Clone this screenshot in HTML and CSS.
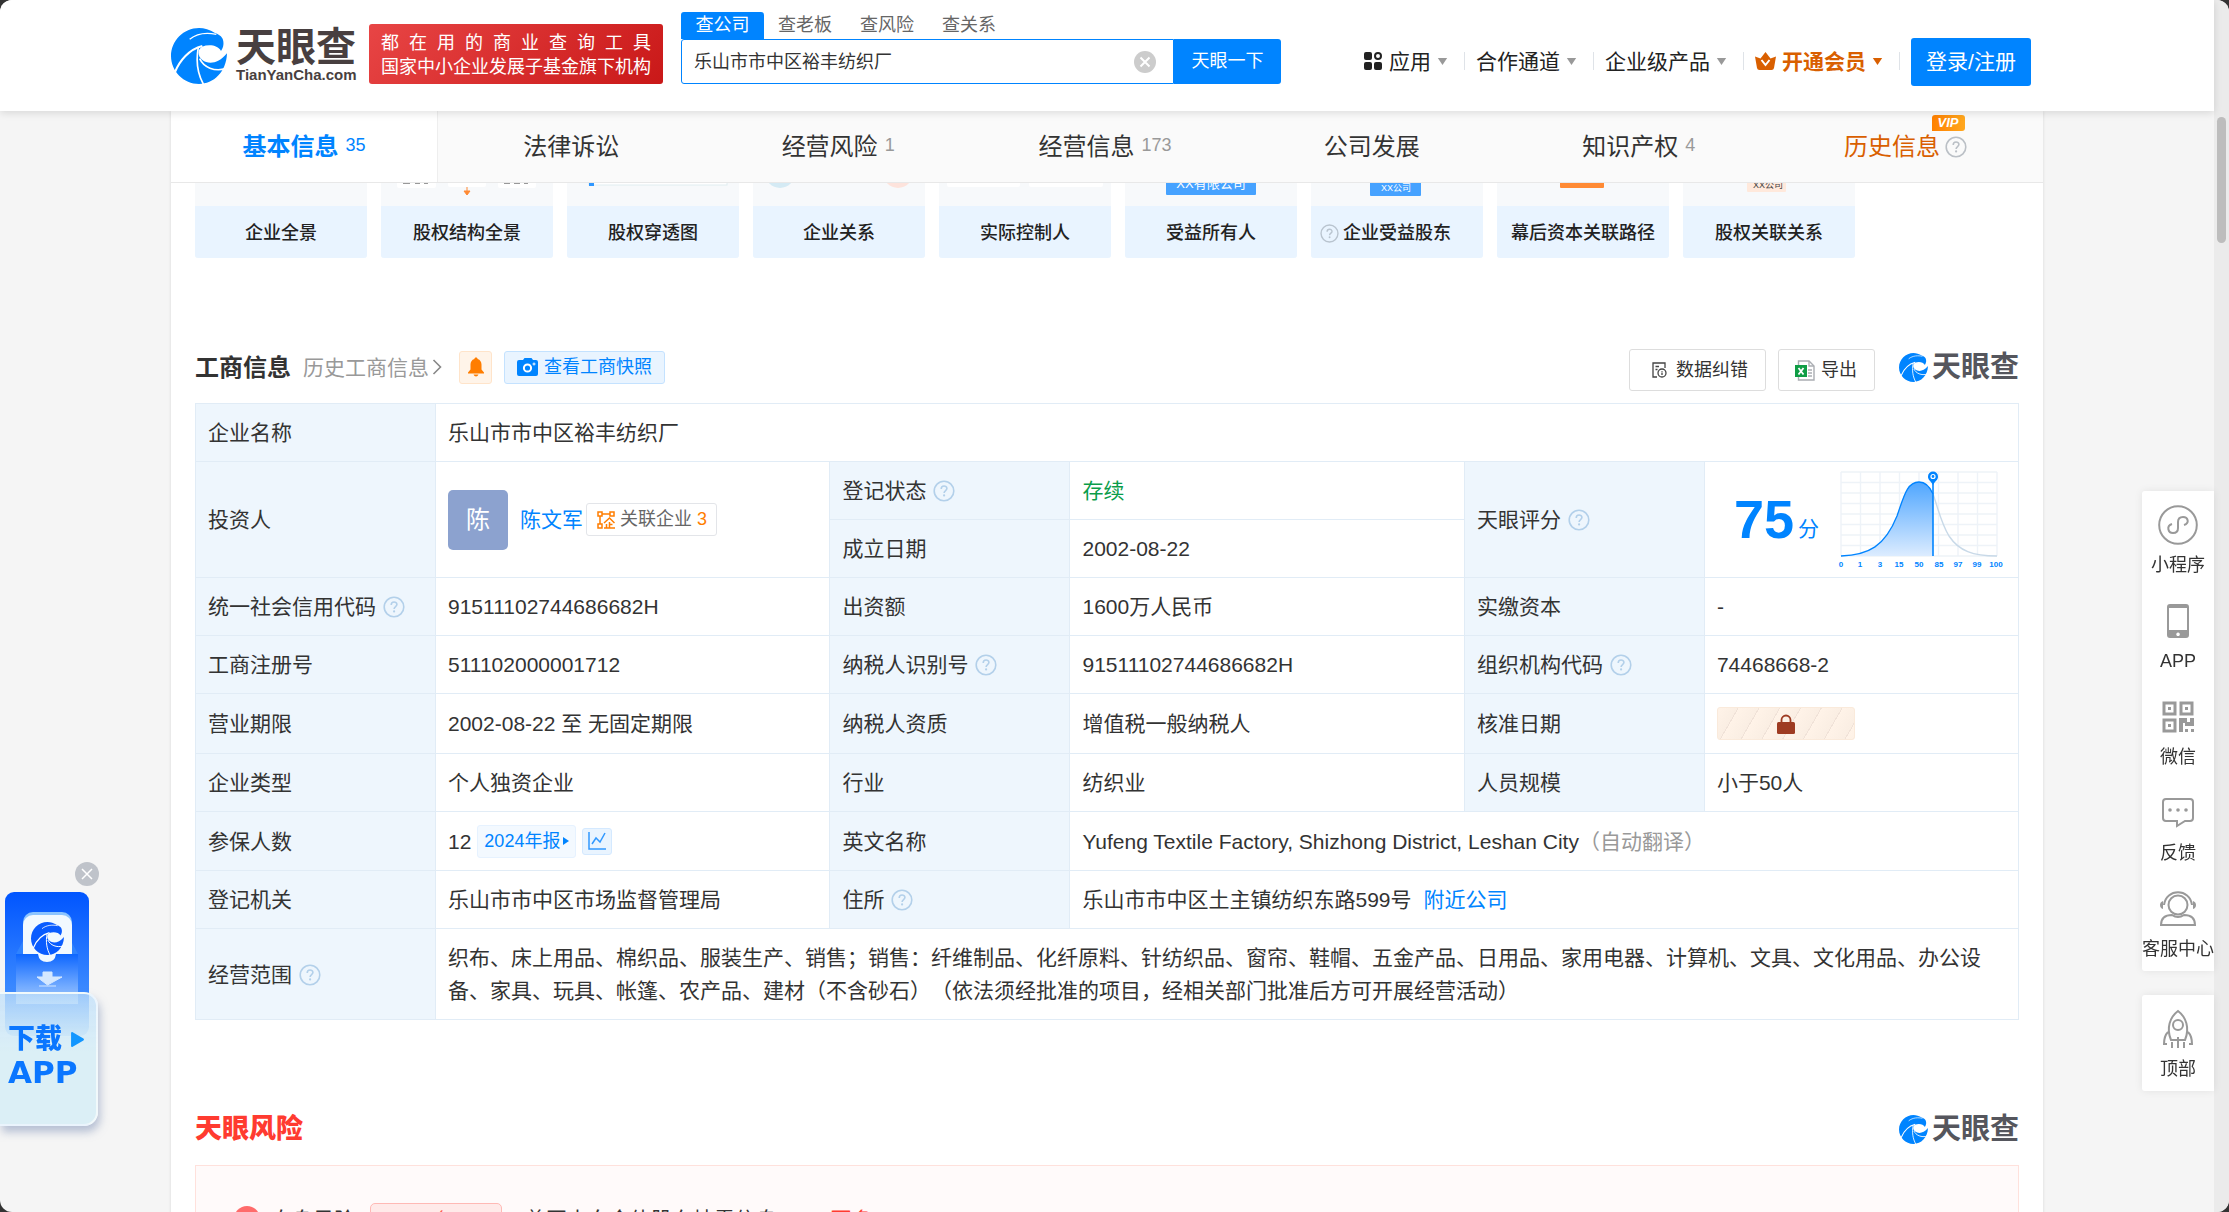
FILE: index.html
```html
<!DOCTYPE html>
<html lang="zh-CN">
<head>
<meta charset="utf-8">
<title>乐山市市中区裕丰纺织厂 - 天眼查</title>
<link rel="stylesheet" href="styles.css">
</head>
<body>
<svg class="defs" aria-hidden="true">
  <symbol id="swirl" viewBox="0 0 168 168">
    <path fill="currentColor" d="M132 15C116 5 100 0 84 0 38 0 0 38 0 84c0 46 38 84 84 84 44 0 82-36 84-92-26 32-56 34-74 20C78 82 80 64 93 56c22-8 48-4 57 13 8-10 10-26 4-38-5-9-14-13-22-16z"/>
    <g fill="none" stroke="var(--cut,#fff)" stroke-width="6">
      <path d="M56 34C80 14 112 14 136 19" stroke-width="4"/>
      <path d="M12 132C26 98 54 64 94 54"/>
      <path d="M82 58C74 100 80 138 98 170" stroke-width="5"/>
      <path d="M86 92C98 118 130 132 164 122" stroke-width="5"/>
    </g>
  </symbol>
  <symbol id="help" viewBox="0 0 22 22">
    <g fill="none" stroke="currentColor" stroke-width="1.6">
      <circle cx="11" cy="11" r="9.8"/>
      <path d="M8.2 9c0-4 5.7-3.8 5.7-.4 0 2-2.8 2-2.8 4.4"/>
    </g>
    <circle cx="11.1" cy="15.4" r="1.1" fill="currentColor"/>
  </symbol>
  <symbol id="caret" viewBox="0 0 12 9"><path d="M0 0h12L6 9z" fill="currentColor"/></symbol>
</svg>

<div class="window">
<div class="page">
  <header class="top">
    <div class="top-inner">
      <a class="logo" href="#">
        <svg class="logo-mark"><use href="#swirl"/></svg>
        <span class="logo-words"><b class="logo-cn">天眼查</b><b class="logo-en">TianYanCha.com</b></span>
      </a>
      <div class="slogan"><p class="spread">都 在 用 的 商 业 查 询 工 具</p><p>国家中小企业发展子基金旗下机构</p></div>
      <form class="search">
        <div class="search-tabs">
          <a class="on" href="#">查公司</a><a href="#">查老板</a><a href="#">查风险</a><a href="#">查关系</a>
        </div>
        <div class="search-row">
          <div class="search-field">
            <input type="text" aria-label="搜索公司" value="乐山市市中区裕丰纺织厂">
            <button type="button" class="clear" aria-label="清空"><svg viewBox="0 0 22 22"><circle cx="11" cy="11" r="11" fill="#ccc"/><path d="M6.500 6.500l9 9M15.500 6.500l-9 9" stroke="#fff" stroke-width="2"/></svg></button>
          </div>
          <button type="button" class="go">天眼一下</button>
        </div>
      </form>
      <nav class="menu">
        <a href="#"><svg class="apps" viewBox="0 0 18 18"><g fill="#222"><rect width="8" height="8" rx="2"/><rect y="10" width="8" height="8" rx="2"/><rect x="10" y="10" width="8" height="8" rx="2"/></g><circle cx="14" cy="4" r="3" fill="none" stroke="#222" stroke-width="2"/></svg>应用<svg class="caret"><use href="#caret"/></svg></a>
        <a href="#">合作通道<svg class="caret"><use href="#caret"/></svg></a>
        <a href="#">企业级产品<svg class="caret"><use href="#caret"/></svg></a>
        <a href="#" class="vip"><svg class="crown" viewBox="0 0 21 18"><path fill="currentColor" d="M0 4.500l5.500 2L10.500 0l5 6.500 5.500-2-2 11.500q-.4 2-2.400 2H4.400q-2 0-2.400-2z"/><path d="M6.500 8l4 5 4-5" fill="none" stroke="#fff" stroke-width="2"/></svg>开通会员<svg class="caret"><use href="#caret"/></svg></a>
        <button type="button" class="login">登录/注册</button>
      </nav>
    </div>
  </header>

  <main class="body">
    <nav class="tabs">
      <a class="on" href="#">基本信息<span>35</span></a>
      <a href="#">法律诉讼</a>
      <a href="#">经营风险<span>1</span></a>
      <a href="#">经营信息<span>173</span></a>
      <a href="#">公司发展</a>
      <a href="#">知识产权<span>4</span></a>
      <a href="#" class="history">历史信息<svg class="help"><use href="#help"/></svg><i class="vip-tag">VIP</i></a>
    </nav>

    <div class="content">
      <div class="cards">
        <a href="#"><svg viewBox="0 0 172 23"></svg><span>企业全景</span></a>
        <a href="#"><svg viewBox="0 0 172 23"><g fill="#fff"><rect x="16" y="-8" width="39" height="13" rx="2"/><rect x="67" y="-8" width="38" height="12" rx="2"/><rect x="117" y="-8" width="38" height="13" rx="2"/></g><path d="M86 4v7M83 8l3 4 3-4z" fill="#ff8a34" stroke="#ff8a34"/><path d="M22 .5h7M34 .5h5M43 .5h4M123 .5h6M133 .5h6M143 .5h4" stroke="#999"/></svg><span>股权结构全景</span></a>
        <a href="#"><svg viewBox="0 0 172 23"><rect x="22" y="-6" width="138" height="8" fill="#fff" stroke="#e0edf0"/><rect x="22" y="-2" width="5" height="5" fill="#2f97ff"/></svg><span>股权穿透图</span></a>
        <a href="#"><svg viewBox="0 0 172 23"><circle cx="27" cy="-10" r="15" fill="#d4eaf4"/><circle cx="145" cy="-10" r="15" fill="#fde3dc"/></svg><span>企业关系</span></a>
        <a href="#"><svg viewBox="0 0 172 23"><g fill="#fff"><rect x="8" y="-8" width="73" height="12" rx="2"/><rect x="90" y="-8" width="74" height="12" rx="2"/></g></svg><span>实际控制人</span></a>
        <a href="#"><svg viewBox="0 0 172 23"><rect x="41" y="-8" width="90" height="20" rx="1" fill="#46a2ff"/><text x="86" y="5" font-size="13" text-anchor="middle" fill="#fff">XX有限公司</text></svg><span>受益所有人</span></a>
        <a href="#"><svg viewBox="0 0 172 23"><rect x="59" y="-8" width="51" height="21" rx="1" fill="#46a2ff"/><text x="85" y="8" font-size="9" text-anchor="middle" fill="#fff">XX公司</text></svg><span><svg class="help"><use href="#help"/></svg>企业受益股东</span></a>
        <a href="#"><svg viewBox="0 0 172 23"><rect x="63" y="-8" width="44" height="13" rx="1" fill="#ff8a34"/></svg><span>幕后资本关联路径</span></a>
        <a href="#"><svg viewBox="0 0 172 23"><rect x="64" y="-8" width="39" height="17" rx="1" fill="#ffe9dc"/><text x="85" y="5" font-size="9" text-anchor="middle" fill="#444">XX公司</text></svg><span>股权关联关系</span></a>
      </div>

      <section>
        <div class="head">
          <div class="head-left">
            <h2>工商信息</h2>
            <a class="past" href="#">历史工商信息<svg viewBox="0 0 10 16"><path d="M1.500 1l7 7-7 7" fill="none" stroke="#888" stroke-width="1.600"/></svg></a>
            <button type="button" class="bell" aria-label="监控"><svg viewBox="0 0 16 19"><path fill="#ff7d00" d="M8 0c1 0 1.500.6 1.600 1.400C12.300 2.200 13.500 4.500 13.500 7v5l2.500 3v1H0v-1l2.500-3V7c0-2.500 1.200-4.800 3.900-5.600C6.500.6 7 0 8 0zM5.500 17h5q-.8 2-2.500 2t-2.500-2z"/></svg></button>
            <button type="button" class="snap"><svg viewBox="0 0 21 18"><path fill="currentColor" d="M2 2h4l1.500-2h7L16 2h3q2 0 2 2v12q0 2-2 2H2q-2 0-2-2V4q0-2 2-2z"/><circle cx="10.500" cy="10" r="3.600" fill="none" stroke="#fff" stroke-width="2"/><path d="M15.500 6h3M17 4.500v3" stroke="#fff"/></svg>查看工商快照</button>
          </div>
          <div class="head-right">
            <button type="button" class="plain"><svg class="fix" viewBox="0 0 15 16"><g fill="none" stroke="#444" stroke-width="1.300"><path d="M5 15H1V1h12v5M3.500 4.500H7M3.500 7.500h2"/><circle cx="10" cy="11" r="4"/><path d="M10 9v.8M10 10.500V13"/></g></svg>数据纠错</button>
            <button type="button" class="plain"><svg class="xls" viewBox="0 0 20 21"><path d="M3.500 1H14l5 5v14H3.500z" fill="#fff" stroke="#aaadb2" stroke-width="1.400"/><path d="M14 1v5h5M13 10h4M13 13h4M13 16h4" fill="none" stroke="#aaadb2" stroke-width="1.300"/><rect y="5" width="12" height="12" fill="#0f9d45"/><path d="M3.500 8l5 6.500M8.500 8l-5 6.500" stroke="#fff" stroke-width="1.800"/></svg>导出</button>
            <span class="mini-logo"><svg><use href="#swirl"/></svg><b>天眼查</b></span>
          </div>
        </div>

        <table class="info">
          <colgroup><col class="k"><col><col class="k"><col><col class="k"><col class="last"></colgroup>
          <tr><th scope="row">企业名称</th><td colspan="5">乐山市市中区裕丰纺织厂</td></tr>
          <tr>
            <th scope="row" rowspan="2">投资人</th>
            <td rowspan="2"><div class="person"><span class="avatar">陈</span><a href="#">陈文军</a><a class="related" href="#"><svg viewBox="0 0 18 18"><g fill="none" stroke="#ff7d00" stroke-width="1.500"><rect x="1" y="1" width="4" height="4"/><rect x="13" y="1" width="4" height="4"/><rect x="1" y="13" width="4" height="4"/><path d="M5 3h8M3 5v8M7 12l5.500-5 5 5M12.500 11v6M12.500 13.500h3M9.500 13v4M7 17h11"/></g></svg>关联企业<em>3</em></a></div></td>
            <th scope="row">登记状态<svg class="help"><use href="#help"/></svg></th><td class="alive">存续</td>
            <th scope="row" rowspan="2">天眼评分<svg class="help"><use href="#help"/></svg></th>
            <td rowspan="2" class="score-cell"><div class="score"><strong>75</strong><span>分</span>
              <svg viewBox="0 0 168 104" role="img" aria-label="评分分布">
                <defs><linearGradient id="fade" x1="0" y1="0" x2="0" y2="1"><stop offset="0" stop-color="#4fa6ff"/><stop offset="1" stop-color="#dcecff"/></linearGradient></defs>
                <path d="M4 4h156M4 14.500h156M4 25h156M4 35.500h156M4 46h156M4 56.500h156M4 67h156M4 77.500h156M4 88h156M4 4v84M23.500 4v84M43 4v84M62.500 4v84M82 4v84M101.500 4v84M121 4v84M140.500 4v84M160 4v84" stroke="#eef3f8" stroke-width="1.400" fill="none"/>
                <path d="M4 88C32 87 48 78 60 48 67 28 70 14 82 14c7 0 11 5 14 12v62z" fill="url(#fade)"/>
                <path d="M96 26c5 14 8 29 16 42 10 15 24 20 48 20" fill="none" stroke="#c8d9e8" stroke-width="1.400"/>
                <path d="M4 88C32 87 48 78 60 48 67 28 70 14 82 14c7 0 11 5 14 12" fill="none" stroke="#0084ff" stroke-width="1.300"/>
                <path d="M96 10v78" stroke="#0084ff" stroke-width="1.600"/>
                <path d="M96 17c-3-5-5-5-5-8.500a5 5 0 0 1 10 0c0 3.500-2 3.500-5 8.500z" fill="#0084ff"/><circle cx="96" cy="8.500" r="2" fill="#0084ff" stroke="#fff" stroke-width="1.200"/>
                <g class="ticks"><text x="4" y="99">0</text><text x="23" y="99">1</text><text x="43" y="99">3</text><text x="62" y="99">15</text><text x="82" y="99">50</text><text x="102" y="99">85</text><text x="121" y="99">97</text><text x="140" y="99">99</text><text x="159" y="99">100</text></g>
              </svg></div></td>
          </tr>
          <tr><th scope="row">成立日期</th><td>2002-08-22</td></tr>
          <tr><th scope="row">统一社会信用代码<svg class="help"><use href="#help"/></svg></th><td>91511102744686682H</td><th scope="row">出资额</th><td>1600万人民币</td><th scope="row">实缴资本</th><td>-</td></tr>
          <tr><th scope="row">工商注册号</th><td>511102000001712</td><th scope="row">纳税人识别号<svg class="help"><use href="#help"/></svg></th><td>91511102744686682H</td><th scope="row">组织机构代码<svg class="help"><use href="#help"/></svg></th><td>74468668-2</td></tr>
          <tr class="tall"><th scope="row">营业期限</th><td>2002-08-22 至 无固定期限</td><th scope="row">纳税人资质</th><td>增值税一般纳税人</td><th scope="row">核准日期</th><td><button type="button" class="lock" aria-label="解锁"><svg viewBox="0 0 18 20"><path d="M4.500 9V6a4.500 4.500 0 0 1 9 0v3" fill="none" stroke="#9e3b22" stroke-width="1.800"/><rect y="8" width="18" height="12" rx="1.500" fill="#9e3b22"/></svg></button></td></tr>
          <tr><th scope="row">企业类型</th><td>个人独资企业</td><th scope="row">行业</th><td>纺织业</td><th scope="row">人员规模</th><td>小于50人</td></tr>
          <tr class="tall2"><th scope="row">参保人数</th><td><div class="staff">12<a class="report" href="#">2024年报<svg viewBox="0 0 6 8"><path d="M0 0l6 4-6 4z" fill="currentColor"/></svg></a><button type="button" class="trend" aria-label="趋势"><svg viewBox="0 0 18 18"><path d="M1 0v17h17" fill="none" stroke="currentColor" stroke-width="1.500"/><path d="M4 12l4-6 4 4 5-9" fill="none" stroke="currentColor" stroke-width="1.500"/></svg></button></div></td><th scope="row">英文名称</th><td colspan="3">Yufeng Textile Factory, Shizhong District, Leshan City<span class="muted">（自动翻译）</span></td></tr>
          <tr><th scope="row">登记机关</th><td>乐山市市中区市场监督管理局</td><th scope="row">住所<svg class="help"><use href="#help"/></svg></th><td colspan="3">乐山市市中区土主镇纺织东路599号<a class="near" href="#">附近公司</a></td></tr>
          <tr><th scope="row">经营范围<svg class="help"><use href="#help"/></svg></th><td colspan="5">织布、床上用品、棉织品、服装生产、销售；销售：纤维制品、化纤原料、针纺织品、窗帘、鞋帽、五金产品、日用品、家用电器、计算机、文具、文化用品、办公设备、家具、玩具、帐篷、农产品、建材（不含砂石）（依法须经批准的项目，经相关部门批准后方可开展经营活动）</td></tr>
        </table>
      </section>

      <section>
        <div class="head">
          <div class="head-left"><h2 class="risk-title">天眼风险</h2></div>
          <div class="head-right"><span class="mini-logo"><svg><use href="#swirl"/></svg><b>天眼查</b></span></div>
        </div>
        <div class="risk">
          <svg class="risk-mark" viewBox="0 0 26 26"><circle cx="13" cy="13" r="13" fill="#ff6b6b"/><circle cx="13" cy="10" r="4" fill="#fff"/><path d="M5 21c2-8 14-8 16 0z" fill="#fff"/></svg>
          <span>自身风险</span>
          <a class="risk-count" href="#">1 条</a>
          <span>曾因未向全体股东披露信息 (1)</span><a class="more" href="#">更多</a>
        </div>
      </section>
    </div>
  </main>
</div>
<div class="scrollbar"><div class="thumb"></div></div>
</div>

<aside class="download">
  <button type="button" class="close" aria-label="关闭"><svg viewBox="0 0 24 24"><circle cx="12" cy="12" r="12" fill="#bfc3ca"/><path d="M7 7l10 10M17 7L7 17" stroke="#fff" stroke-width="1.500"/></svg></button>
  <a class="download-card" href="#">
    <svg class="box" viewBox="0 0 84 144">
      <defs>
        <linearGradient id="deep" x1="0" y1="0" x2="0" y2="1"><stop offset="0" stop-color="#0055ff"/><stop offset="1" stop-color="#57a2ff"/></linearGradient>
        <linearGradient id="front" x1="0" y1="0" x2="0" y2="1"><stop offset="0" stop-color="#0d66ff"/><stop offset="1" stop-color="#a9d0ff"/></linearGradient>
      </defs>
      <rect width="84" height="144" rx="9" fill="url(#deep)"/>
      <path d="M11 62l7-13h48l7 13z" fill="#2f83ff"/>
      <rect x="18" y="20" width="49" height="50" rx="10" fill="#8cc4ff"/>
      <rect x="18" y="23" width="49" height="50" rx="10" fill="#f2f9ff"/>
      <path d="M11 62h22q1 8 9 8t9-8h22v50H11z" fill="url(#front)"/>
      <path d="M38 80h9v5h10L42.500 93 32 85h6zM34 94h17" fill="#d5e8ff" stroke="#d5e8ff"/>
      <svg x="26" y="30" width="33" height="33" color="#0a5cff"><use href="#swirl"/></svg>
    </svg>
    <span class="glass"><b>下载<svg viewBox="0 0 12 14"><path d="M1 1l10 6-10 6z" fill="#1296ff" stroke="#1296ff" stroke-width="2" stroke-linejoin="round"/></svg></b><b>APP</b></span>
  </a>
</aside>

<aside class="side">
  <div class="side-group">
    <a href="#"><svg viewBox="0 0 40 40"><circle cx="20" cy="20" r="18.800"/><path d="M14 19c-6 2-4 9 1 9 3 0 5-2 5-5v-6c0-3 2-5 5-5 5 0 7 6 1 8"/></svg>小程序</a>
    <a href="#"><svg viewBox="0 0 40 40"><path class="f" fill-rule="evenodd" d="M12 3h16q3 0 3 3v28q0 3-3 3H12q-3 0-3-3V6q0-3 3-3zm-1 4v22h18V7zm9 24.500a1.800 1.800 0 1 0 .1 0z"/></svg>APP</a>
    <a href="#"><svg viewBox="0 0 40 40"><path stroke-width="3" d="M6 6h11v11H6zM23 6h11v11H23zM6 23h11v11H6z"/><path class="f" d="M10 10h3v3h-3zM27 10h3v3h-3zM10 27h3v3h-3zM21 21h8v4h3v-4h4v8h-9v-3h-2v9h-4zM27 32h3v3h-3zM33 32h3v3h-3z"/></svg>微信</a>
    <a href="#"><svg viewBox="0 0 40 40"><path d="M8 6h24q3 0 3 3v16q0 3-3 3h-5l-8 5v-5H8q-3 0-3-3V9q0-3 3-3z"/><g class="f"><circle cx="12" cy="17" r="1.800"/><circle cx="20" cy="17" r="1.800"/><circle cx="28" cy="17" r="1.800"/></g></svg>反馈</a>
    <a href="#"><svg viewBox="0 0 40 40"><circle cx="20" cy="16" r="9.500"/><path d="M6 16C8-1 32-1 34 16M3 36c0-8 6-10 11-10q6 4 12 0c5 0 11 2 11 10z"/><path class="f" d="M5 12q-3 1-3 4t3 4zM35 12q3 1 3 4t-3 4z"/></svg>客服中心</a>
  </div>
  <div class="side-group">
    <a href="#"><svg viewBox="0 0 40 40"><path d="M13 31c-5-12-1-23 7-29 8 6 12 17 7 29z"/><circle cx="20" cy="16" r="5"/><path d="M10 23c-3 3-4 7-4 12h3M30 23c3 3 4 7 4 12h-3M20 28v11M14 33v6M26 33v6"/></svg>顶部</a>
  </div>
</aside>
</body>
</html>
```
FILE: styles.css
```css
*{box-sizing:border-box;margin:0;padding:0}
html{background:#333}
body{font-family:"Liberation Sans","Noto Sans CJK SC",sans-serif;font-size:21px;line-height:33px;color:#333;text-spacing-trim:space-all}
a{color:#0084ff;text-decoration:none}
button,input{font:inherit;color:inherit;border:0;background:none}
button{cursor:pointer}
svg{display:block;flex:none}
.defs{position:absolute;width:0;height:0}
.help{width:22px;height:22px}

.window{display:flex;height:100vh;overflow:hidden;border-radius:12px;background:#f5f5f5}
.page{flex:1;min-width:0}
.scrollbar{width:15px;padding:117px 3px 0;background:#ebebeb}
.thumb{height:126px;border-radius:5px;background:#bdbdbd}

/* header */
.top{position:relative;z-index:1;height:111px;padding:0 12px 27px;background:#fff;box-shadow:0 2px 8px rgba(0,0,0,.12)}
.top-inner{display:flex;align-items:flex-end;height:100%;max-width:1872px;margin:0 auto;padding-right:12px}
.logo{display:flex;gap:9px;margin-right:12px;color:#0084ff}
.logo-mark{width:56px;height:56px}
.logo-words{display:flex;flex-direction:column;width:121px;color:#483f40}
.logo-cn{font-size:40px;line-height:38px}
.logo-en{font-size:15px;line-height:18px}
.slogan{width:294px;height:60px;margin-right:18px;padding:7px 12px;border-radius:3px;background:linear-gradient(135deg,#e84545,#c91818);color:#fff;font-size:18px;line-height:24px;white-space:nowrap}
.spread{text-align-last:justify}
.search{width:600px}
.search-tabs{display:flex;font-size:18px;line-height:27px}
.search-tabs a{width:82px;text-align:center;color:#666}
.search-tabs .on{width:83px;border-radius:3px 3px 0 0;background:#0084ff;color:#fff}
.search-row{display:flex;height:45px}
.search-field{display:flex;flex:1;align-items:center;padding:0 17px 0 12px;border:1px solid #0084ff;border-radius:3px 0 0 3px}
.search-field input{flex:1;min-width:0;padding-top:2px;font-size:18px;line-height:27px;outline:0}
.clear svg{width:22px;height:22px}
.go{width:107px;border-radius:0 3px 3px 0;background:#0084ff;color:#fff;font-size:18px}
.menu{display:flex;align-items:center;height:44px;margin-left:auto;white-space:nowrap}
.menu a{display:flex;align-items:center;padding-bottom:2px;color:#222}
.menu a::after{content:"";width:1px;height:18px;margin:0 11px 0 16px;background:#dfe3e8}
.menu .caret{width:11px;height:7px;margin-left:6px;color:#999}
.apps{width:18px;height:18px;margin-right:7px}
.crown{width:21px;height:18px;margin-right:6px}
.menu .vip,.menu .vip .caret{color:#d95f00}
.menu .vip{font-weight:700}
.login{width:120px;height:48px;padding-bottom:2px;border-radius:3px;background:#0084ff;color:#fff}

/* page column */
.body{max-width:1872px;margin:0 auto;background:#fff;box-shadow:0 0 3px rgba(0,0,0,.12)}
.tabs{display:grid;grid-template-columns:repeat(7,1fr);height:72px;padding-right:4px;border-bottom:1px solid #e8e8e8;background:#fafafa;font-size:24px}
.tabs a{position:relative;display:flex;align-items:center;justify-content:center;color:#333}
.tabs span{margin-left:7px;padding-bottom:2px;color:#999;font-size:18px}
.tabs .on{border-right:1px solid #eee;background:#fff;color:#0084ff;font-weight:700}
.tabs .on span{color:#0084ff;font-weight:400}
.tabs .history{color:#d95f00}
.tabs .help{margin-left:5px;color:#bbc0c6}
.vip-tag{position:absolute;top:4px;left:calc(50% + 26px);width:33px;border-radius:3px 3px 3px 0;background:linear-gradient(90deg,#ff8000,#ffa81f);color:#fff;font-size:13px;font-weight:700;line-height:16px;text-align:center}
.content{padding:0 24px}
.cards{display:grid;grid-template-columns:repeat(9,minmax(0,172px));gap:14px}
.cards a{overflow:hidden;border-radius:0 0 3px 3px;background:#f7f9fb;color:#222}
.cards a > svg{width:100%;height:23px}
.cards a > span{display:flex;align-items:center;justify-content:center;height:52px;padding-top:2px;background:#e9f4ff;font-size:18px;font-weight:500;white-space:nowrap}
.cards .help{width:19px;height:19px;margin:0 4px 0 -23px;color:#b9c4cf}

/* section head */
.head{display:flex;justify-content:space-between;align-items:flex-start;height:42px;margin:91px 0 12px;white-space:nowrap}
.head-left{display:flex;align-items:center;height:36px}
.head-right{display:flex;gap:12px}
h2{font-size:24px}
.past{display:flex;align-items:center;gap:3px;margin:0 17px 0 12px;color:#999}
.past svg{width:10px;height:16px}
.bell{display:grid;place-items:center;width:33px;height:33px;margin-right:12px;border:1px solid #ffe4ca;border-radius:3px;background:#fff4e9}
.bell svg{width:16px;height:20px}
.snap{display:flex;align-items:center;gap:6px;height:33px;padding:0 12px;border:1px solid #c4e2ff;border-radius:3px;background:#e9f4ff;color:#0084ff;font-size:18px}
.snap svg{width:21px;height:18px}
.plain{display:flex;align-items:center;height:42px;padding:0 17px 0 16px;border:1px solid #ddd;border-radius:3px;font-size:18px}
.fix{width:15px;height:16px;margin:0 9px 0 6px}
.xls{width:20px;height:21px;margin-right:6px}
.mini-logo{display:flex;align-items:center;gap:4px;height:36px;margin-left:12px;color:#55565d}
.mini-logo svg{width:29px;height:29px;color:#0084ff}
.mini-logo b{font-size:29px}

/* registration table */
.info{width:100%;border-collapse:collapse;table-layout:fixed}
.info .k{width:240px}
.info .last{width:314px}
.info th,.info td{padding:12px;border:1px solid #e1ecf6;text-align:left;font-weight:400}
.info th{background:#eef6fd}
.info tr > *{height:58px}
.info .tall > *{height:60px}
.info .tall2 > *{height:59px}
.info td > .person,.info td > .staff,.info .lock{margin-top:-6px;margin-bottom:-6px}
.info .help{display:inline-block;margin-left:7px;vertical-align:-4px;color:#b3d0ea}
.info .alive{color:#0a9d4a}
.muted{color:#999}
.near{margin-left:12px}
.person{display:flex;align-items:center}
.avatar{width:60px;height:60px;margin-right:12px;border-radius:5px;background:#8ca2cf;color:#fff;font-size:24px;line-height:60px;text-align:center}
.related{display:flex;align-items:center;gap:5px;height:33px;margin-left:3px;padding:0 9px 0 10px;border:1px solid #e3e5e9;border-radius:3px;color:#666;font-size:18px}
.related svg{width:18px;height:18px}
.related em{color:#ff7d00;font-style:normal}
.info .score-cell{padding:0 8px 0 29px}
.score{display:flex;align-items:center;color:#0084ff}
.score strong{font-size:54px}
.score span{margin:18px 18px 0 4px}
.score svg{width:168px;height:104px}
.ticks{font-size:8px;font-weight:700;fill:#0084ff;text-anchor:middle}
.lock{display:grid;place-items:center;width:138px;height:33px;border:1px solid #faeadb;border-radius:3px;background:repeating-linear-gradient(120deg,#fff3e8 0,#faeee3 17px,#f0e2d8 17px,#f0e2d8 18px)}
.lock svg{width:18px;height:20px}
.staff{display:flex;align-items:center}
.report{display:flex;align-items:center;gap:3px;height:33px;margin:0 6px;padding:0 6px;border:1px solid #e6f2ff;border-radius:3px;background:#f3f9ff;font-size:18px}
.report svg{width:6px;height:8px}
.trend{display:grid;place-items:center;width:30px;height:27px;border:1px solid #d4e9ff;border-radius:3px;background:#e9f4ff;color:#3098ff}
.trend svg{width:18px;height:18px}

/* risk */
.risk-title{color:#ff3b30;font-size:27px;font-weight:900}
.risk{display:flex;align-items:flex-start;padding:37px 38px;border:1px solid #ffe1dc;background:#fffafa;white-space:nowrap}
.risk-mark{width:26px;height:26px;margin:3px 11px 0 0}
.risk-count{width:132px;height:36px;margin:0 23px 0 15px;border:1px solid #ffb9b5;border-radius:5px;background:#ffeae9;color:#ff5a50;font-size:18px;text-align:center}
.more{margin-left:22px;color:#ff3b30}

/* floating download card */
.download{position:fixed;left:0;top:862px;width:102px}
.close{display:block;margin-left:75px}
.close svg{width:24px;height:24px}
.download-card{display:block;margin-top:6px}
.box{width:84px;height:144px;margin-left:5px}
.glass{display:block;position:relative;width:98px;height:134px;margin-top:-44px;padding:29px 0 0 8px;border:2px solid rgba(255,255,255,.6);border-left:0;border-radius:0 14px 14px 0;background:linear-gradient(180deg,rgba(190,222,250,.75),#dbeff6 45%);box-shadow:2px 6px 8px rgba(120,140,180,.5)}
.glass b{display:flex;align-items:center;gap:9px;color:#0a76ff;font-size:27px;font-weight:900}
.glass b + b{font-family:"DejaVu Sans","Liberation Sans",sans-serif;font-size:31px}
.glass svg{width:13px;height:15px}

/* floating side bar */
.side{position:fixed;right:15px;top:491px;display:grid;gap:24px;width:72px}
.side-group{border-radius:3px 0 0 3px;background:#fff;box-shadow:0 0 9px rgba(0,0,0,.08)}
.side a{display:flex;flex-direction:column;align-items:center;height:96px;padding-top:14px;color:#333;font-size:18px;line-height:41px;white-space:nowrap}
.side svg{width:40px;height:40px;fill:none;stroke:#999;stroke-width:2}
.side .f{fill:#999;stroke:none}
```
